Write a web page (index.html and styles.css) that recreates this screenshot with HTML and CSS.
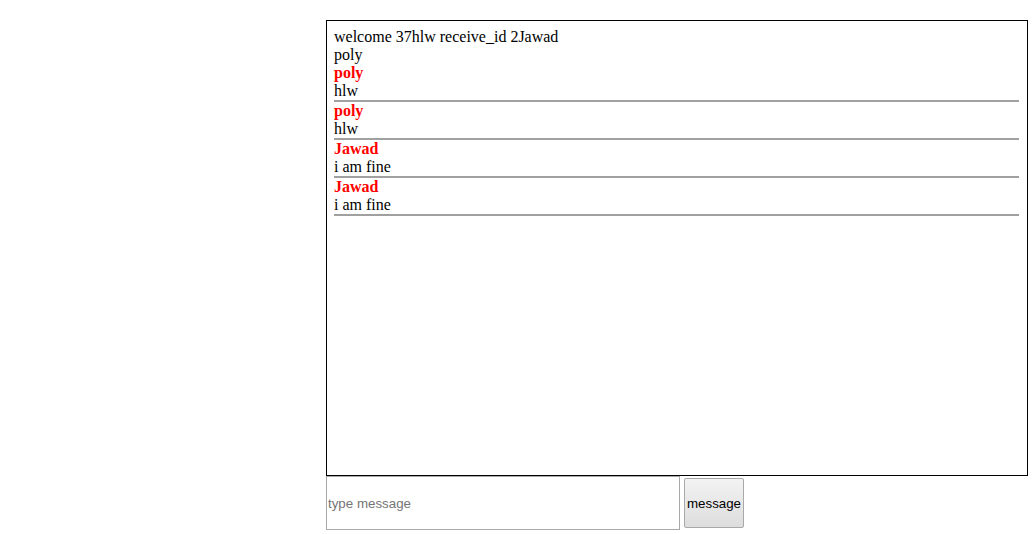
FILE: index.html
```html
<!DOCTYPE html>
<html>
<head>
<meta charset="utf-8">
<link rel="stylesheet" href="styles.css">
</head>
<body>
<div class="page">
  <div class="chat">
    <div class="line">welcome 37hlw receive_id 2Jawad</div>
    <div class="line">poly</div>
    <div class="msg">
      <div class="name">poly</div>
      <div class="line">hlw</div>
    </div>
    <div class="msg">
      <div class="name">poly</div>
      <div class="line">hlw</div>
    </div>
    <div class="msg">
      <div class="name">Jawad</div>
      <div class="line">i am fine</div>
    </div>
    <div class="msg">
      <div class="name">Jawad</div>
      <div class="line">i am fine</div>
    </div>
  </div>
  <div class="composer">
    <input class="input" type="text" placeholder="type message">
    <button class="send">message</button>
  </div>
</div>
</body>
</html>
```
FILE: styles.css
```css
html, body {
  margin: 0;
  padding: 0;
  background: #fff;
}
.page {
  padding: 20px 0 0 326px;
}
.chat {
  box-sizing: border-box;
  width: 702px;
  height: 456px;
  border: 1px solid #000;
  padding: 7px 8px 0 7px;
  font-family: "Liberation Serif", "Times New Roman", serif;
  font-size: 16px;
  line-height: 18px;
  color: #000;
}
.msg {
  border-bottom: 2px solid #a0a0a0;
}
.name {
  color: #f00;
  font-weight: bold;
}
.composer {
  display: flex;
  align-items: center;
  gap: 4px;
}
.input {
  box-sizing: border-box;
  width: 354px;
  height: 54px;
  margin: 0;
  padding: 0 1px;
  border: 1px solid #a9a9a9;
  font-family: "Liberation Sans", Arial, sans-serif;
  font-size: 13.33px;
  color: #000;
  outline: none;
}
.input::placeholder {
  color: #757575;
}
.send {
  box-sizing: border-box;
  width: 60px;
  height: 50px;
  margin: 0;
  padding: 0;
  border: 1px solid #a9a9a9;
  border-radius: 2px;
  background: linear-gradient(#f3f3f3, #dddddd);
  font-family: "Liberation Sans", Arial, sans-serif;
  font-size: 13.33px;
  color: #000;
}
```
